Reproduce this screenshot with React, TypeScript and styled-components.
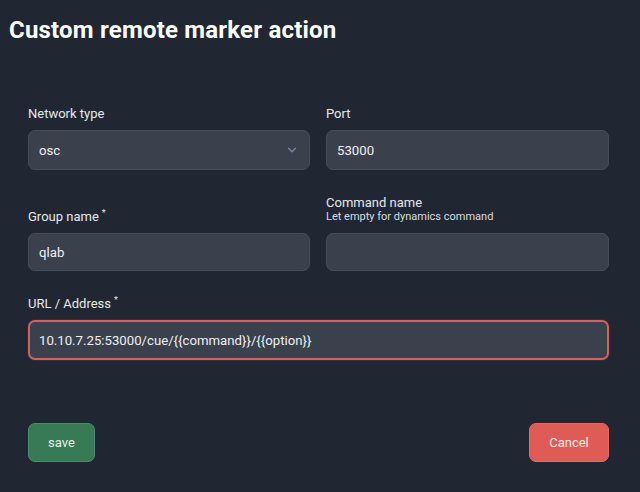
import React from "react";
import styled, { createGlobalStyle } from "styled-components";

const Global = createGlobalStyle`
  html, body { margin: 0; padding: 0; background: #202733; }
  body { font-family: Roboto, "Noto Sans", sans-serif; color: #e8eaee; }
  * { box-sizing: border-box; }
`;

const Page = styled.div`
  width: 640px;
  height: 492px;
  background: #202733;
  display: flex;
  flex-direction: column;
`;

const Title = styled.h1`
  margin: 0;
  padding: 14px 0 0 9px;
  font-family: Roboto, sans-serif;
  font-weight: 700;
  font-size: 24px;
  line-height: 32px;
  letter-spacing: 0.2px;
  color: #ffffff;
`;

const Form = styled.div`
  display: grid;
  grid-template-columns: 282px 283px;
  column-gap: 16px;
  row-gap: 25px;
  padding: 60px 31px 0 28px;
`;

const Field = styled.div<{ $full?: boolean }>`
  display: flex;
  flex-direction: column;
  justify-content: flex-end;
  grid-column: ${(p) => (p.$full ? "1 / span 2" : "auto")};
`;

const Label = styled.label`
  font-size: 13px;
  line-height: 16px;
  color: #e6e8ec;
  margin-bottom: 8px;
  display: flex;
  flex-direction: column;
`;

const Star = styled.sup`
  font-size: 9px;
  margin-left: 3px;
  line-height: 0;
`;

const Hint = styled.span`
  font-size: 11px;
  line-height: 12px;
  margin-bottom: 2px;
  color: #d8dbe0;
`;

const Box = styled.div<{ $error?: boolean; $h: number }>`
  height: ${(p) => p.$h}px;
  border-radius: 7px;
  background: #3b404d;
  border: ${(p) => (p.$error ? "2px solid #d85f5b" : "1px solid #474c59")};
  box-shadow: ${(p) => (p.$error ? "0 0 0 1px #2a2f38" : "none")};
  display: flex;
  align-items: center;
  justify-content: space-between;
  padding: 0 ${(p) => (p.$error ? 9 : 10)}px;
  font-size: 13.2px;
  color: #eef0f3;
`;

const Chevron = styled.svg`
  width: 14px;
  height: 14px;
`;

const Actions = styled.div`
  margin-top: auto;
  display: flex;
  justify-content: space-between;
  padding: 0 31px 30px 28px;
`;

const Button = styled.button<{ $variant: "save" | "cancel" }>`
  height: 39px;
  border-radius: 7px;
  font-family: Roboto, sans-serif;
  font-size: 13px;
  padding: 0;
  width: ${(p) => (p.$variant === "save" ? 67 : 80)}px;
  color: ${(p) => (p.$variant === "save" ? "#e4f1e8" : "#fde9e8")};
  background: ${(p) => (p.$variant === "save" ? "#397a56" : "#de5b56")};
  border: 1px solid ${(p) => (p.$variant === "save" ? "#4a8e68" : "#e36a65")};
`;

type Row = { label: string; required?: boolean; hint?: string; value: string; select?: boolean; h: number };

function FieldBox({ row }: { row: Row }) {
  return (
    <Field>
      <Label>
        <span>
          {row.label}
          {row.required && <Star>*</Star>}
        </span>
        {row.hint && <Hint>{row.hint}</Hint>}
      </Label>
      <Box $h={row.h}>
        <span>{row.value}</span>
        {row.select && (
          <Chevron viewBox="0 0 24 24" fill="none" stroke="#7f8593" strokeWidth="2.4" strokeLinecap="round" strokeLinejoin="round">
            <path d="M6 9l6 6 6-6" />
          </Chevron>
        )}
      </Box>
    </Field>
  );
}

export default function App() {
  const rows: Row[] = [
    { label: "Network type", value: "osc", select: true, h: 40 },
    { label: "Port", value: "53000", h: 40 },
    { label: "Group name", required: true, value: "qlab", h: 38 },
    { label: "Command name", hint: "Let empty for dynamics command", value: "", h: 38 },
  ];
  return (
    <Page>
      <Global />
      <Title>Custom remote marker action</Title>
      <Form>
        {rows.map((r) => (
          <FieldBox key={r.label} row={r} />
        ))}
        <Field $full>
          <Label>
            <span>
              URL / Address<Star>*</Star>
            </span>
          </Label>
          <Box $error $h={40}>
            <span>{"10.10.7.25:53000/cue/{{command}}/{{option}}"}</span>
          </Box>
        </Field>
      </Form>
      <Actions>
        <Button $variant="save">save</Button>
        <Button $variant="cancel">Cancel</Button>
      </Actions>
    </Page>
  );
}
